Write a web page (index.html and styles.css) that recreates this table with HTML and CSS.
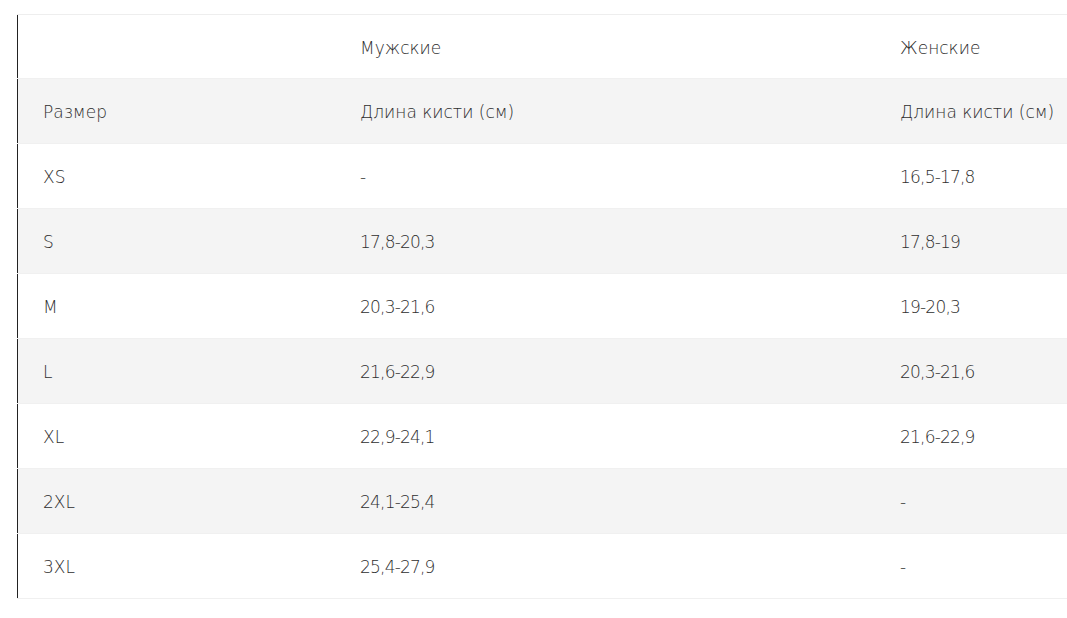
FILE: index.html
```html
<!DOCTYPE html>
<html lang="ru">
<head>
<meta charset="utf-8">
<title>Таблица размеров</title>
<link rel="stylesheet" href="styles.css">
</head>
<body>
<div class="wrap">
  <div class="table">
    <div class="row head"><div class="cell first"></div><div class="cell">Мужские</div><div class="cell">Женские</div></div>
    <div class="row alt"><div class="cell first">Размер</div><div class="cell">Длина кисти (см)</div><div class="cell">Длина кисти (см)</div></div>
    <div class="row"><div class="cell first">XS</div><div class="cell num">-</div><div class="cell num">16,5-17,8</div></div>
    <div class="row alt"><div class="cell first">S</div><div class="cell num">17,8-20,3</div><div class="cell num">17,8-19</div></div>
    <div class="row"><div class="cell first">M</div><div class="cell num">20,3-21,6</div><div class="cell num">19-20,3</div></div>
    <div class="row alt"><div class="cell first">L</div><div class="cell num">21,6-22,9</div><div class="cell num">20,3-21,6</div></div>
    <div class="row"><div class="cell first">XL</div><div class="cell num">22,9-24,1</div><div class="cell num">21,6-22,9</div></div>
    <div class="row alt"><div class="cell first">2XL</div><div class="cell num">24,1-25,4</div><div class="cell num">-</div></div>
    <div class="row last"><div class="cell first">3XL</div><div class="cell num">25,4-27,9</div><div class="cell num">-</div></div>
  </div>
</div>
</body>
</html>
```
FILE: styles.css
```css
html, body {
  margin: 0;
  padding: 0;
  background: #fff;
  overflow: hidden;
}
.wrap {
  padding: 14px 0 0 17px;
}
.table {
  display: flex;
  flex-direction: column;
  border-top: 1px solid #eeeeee;
  font-family: "DejaVu Sans", sans-serif;
  font-weight: 200;
  font-size: 17px;
  color: #2e2e2e;
}
.row {
  display: grid;
  grid-template-columns: 318px 540px 1fr;
  height: 65px;
  border-bottom: 1px solid #f0f0f0;
  box-sizing: border-box;
}
.row.head { height: 64px; }
.row.alt { background: #f4f4f4; }
.cell {
  display: flex;
  align-items: center;
  padding-left: 25px;
  padding-top: 2px;
  white-space: nowrap;
  overflow: hidden;
}
.cell.num {
  letter-spacing: -0.8px;
}
.cell.first {
  border-left: 1px solid #222;
}
```
